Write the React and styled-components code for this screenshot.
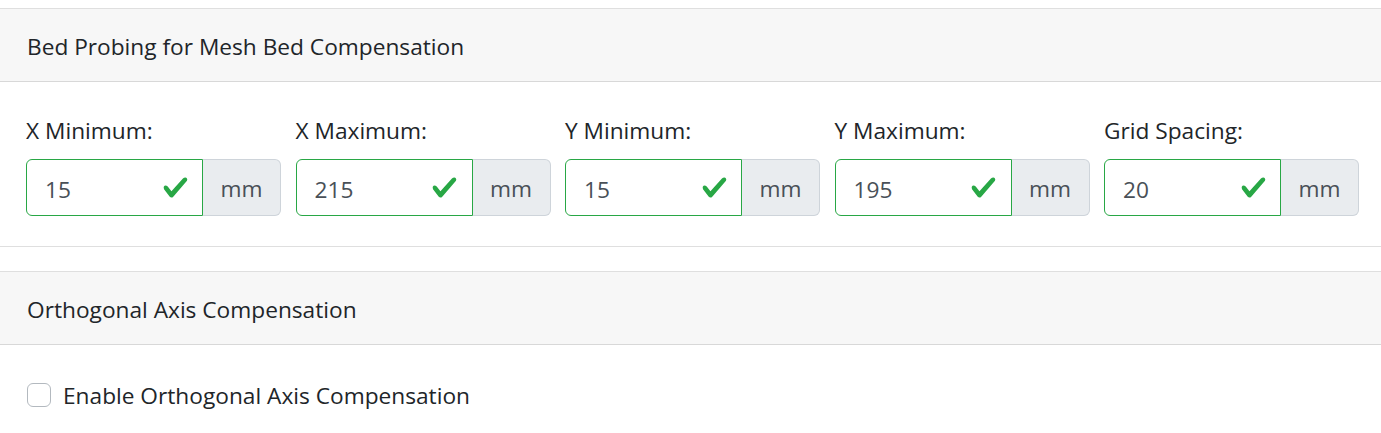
import React from "react";
import styled, { createGlobalStyle } from "styled-components";

const Global = createGlobalStyle`
  html, body { margin: 0; padding: 0; background: #fff; }
  body {
    font-family: "Open Sans", "Noto Sans", sans-serif;
    font-size: 22.7px;
    line-height: 36px;
    color: #212529;
  }
  * { box-sizing: border-box; }
`;

const Page = styled.div`
  padding-top: 8px;
  width: 1381px;
`;

const Card = styled.section`
  border-top: 1px solid rgba(0, 0, 0, 0.125);
  border-bottom: 1px solid rgba(0, 0, 0, 0.125);
  margin-bottom: ${(p) => p.$gap || 0}px;
`;

const CardHeader = styled.div`
  background: #f7f7f7;
  border-bottom: 1px solid rgba(0, 0, 0, 0.125);
  padding: 20px 27px 16px;
  line-height: 36px;
`;

const CardBody = styled.div`
  padding: 30px 22px 30px 26px;
`;

const FieldGrid = styled.div`
  display: grid;
  grid-template-columns: repeat(5, 1fr);
  column-gap: 14.5px;
`;

const Field = styled.div`
  display: flex;
  flex-direction: column;
  min-width: 0;
`;

const Label = styled.label`
  line-height: 36px;
  padding-top: 1px;
  margin-bottom: 10px;
`;

const InputGroup = styled.div`
  display: flex;
  height: 57px;
`;

const checkSvg =
  "data:image/svg+xml,%3csvg xmlns='http://www.w3.org/2000/svg' width='8' height='8' viewBox='0 0 8 8'%3e%3cpath fill='%2328a745' d='M2.3 6.73L.6 4.53c-.4-1.04.46-1.4 1.1-.8l1.1 1.4 3.4-3.8c.6-.63 1.6-.27 1.2.7l-4 4.6c-.43.5-.8.4-1.1.1z'/%3e%3c/svg%3e";

const Input = styled.input`
  flex: 1;
  min-width: 0;
  height: 57px;
  border: 1px solid ${(p) => (p.$valid ? "#28a745" : "#ced4da")};
  border-radius: 6px 0 0 6px;
  padding: 11px 50px 7px 18px;
  font: inherit;
  color: #495057;
  background-color: #fff;
  background-image: url("${checkSvg}");
  background-repeat: no-repeat;
  background-position: right 13.5px center;
  background-size: 27px 27px;
  outline: none;
`;

const Addon = styled.span`
  display: flex;
  align-items: center;
  justify-content: center;
  width: 78px;
  flex: none;
  padding-top: 3px;
  background: #e9ecef;
  border: 1px solid #ced4da;
  border-left: none;
  border-radius: 0 6px 6px 0;
  color: #495057;
`;

const CheckRow = styled.label`
  display: flex;
  align-items: center;
  line-height: 36px;
`;

const CheckBox = styled.span`
  width: 24px;
  height: 24px;
  margin-left: 1px;
  border: 1px solid #b3b9bf;
  border-radius: 6px;
  background: #fff;
  flex: none;
`;

const CheckText = styled.span`
  margin-left: 12px;
  padding-top: 3px;
`;

const fields = [
  { label: "X Minimum:", value: "15" },
  { label: "X Maximum:", value: "215" },
  { label: "Y Minimum:", value: "15" },
  { label: "Y Maximum:", value: "195" },
  { label: "Grid Spacing:", value: "20" },
];

export default function App() {
  return (
    <Page>
      <Global />
      <Card $gap={24}>
        <CardHeader>Bed Probing for Mesh Bed Compensation</CardHeader>
        <CardBody>
          <FieldGrid>
            {fields.map((f) => (
              <Field key={f.label}>
                <Label>{f.label}</Label>
                <InputGroup>
                  <Input $valid defaultValue={f.value} />
                  <Addon>mm</Addon>
                </InputGroup>
              </Field>
            ))}
          </FieldGrid>
        </CardBody>
      </Card>
      <Card>
        <CardHeader>Orthogonal Axis Compensation</CardHeader>
        <CardBody>
          <CheckRow>
            <CheckBox />
            <CheckText>Enable Orthogonal Axis Compensation</CheckText>
          </CheckRow>
        </CardBody>
      </Card>
    </Page>
  );
}
